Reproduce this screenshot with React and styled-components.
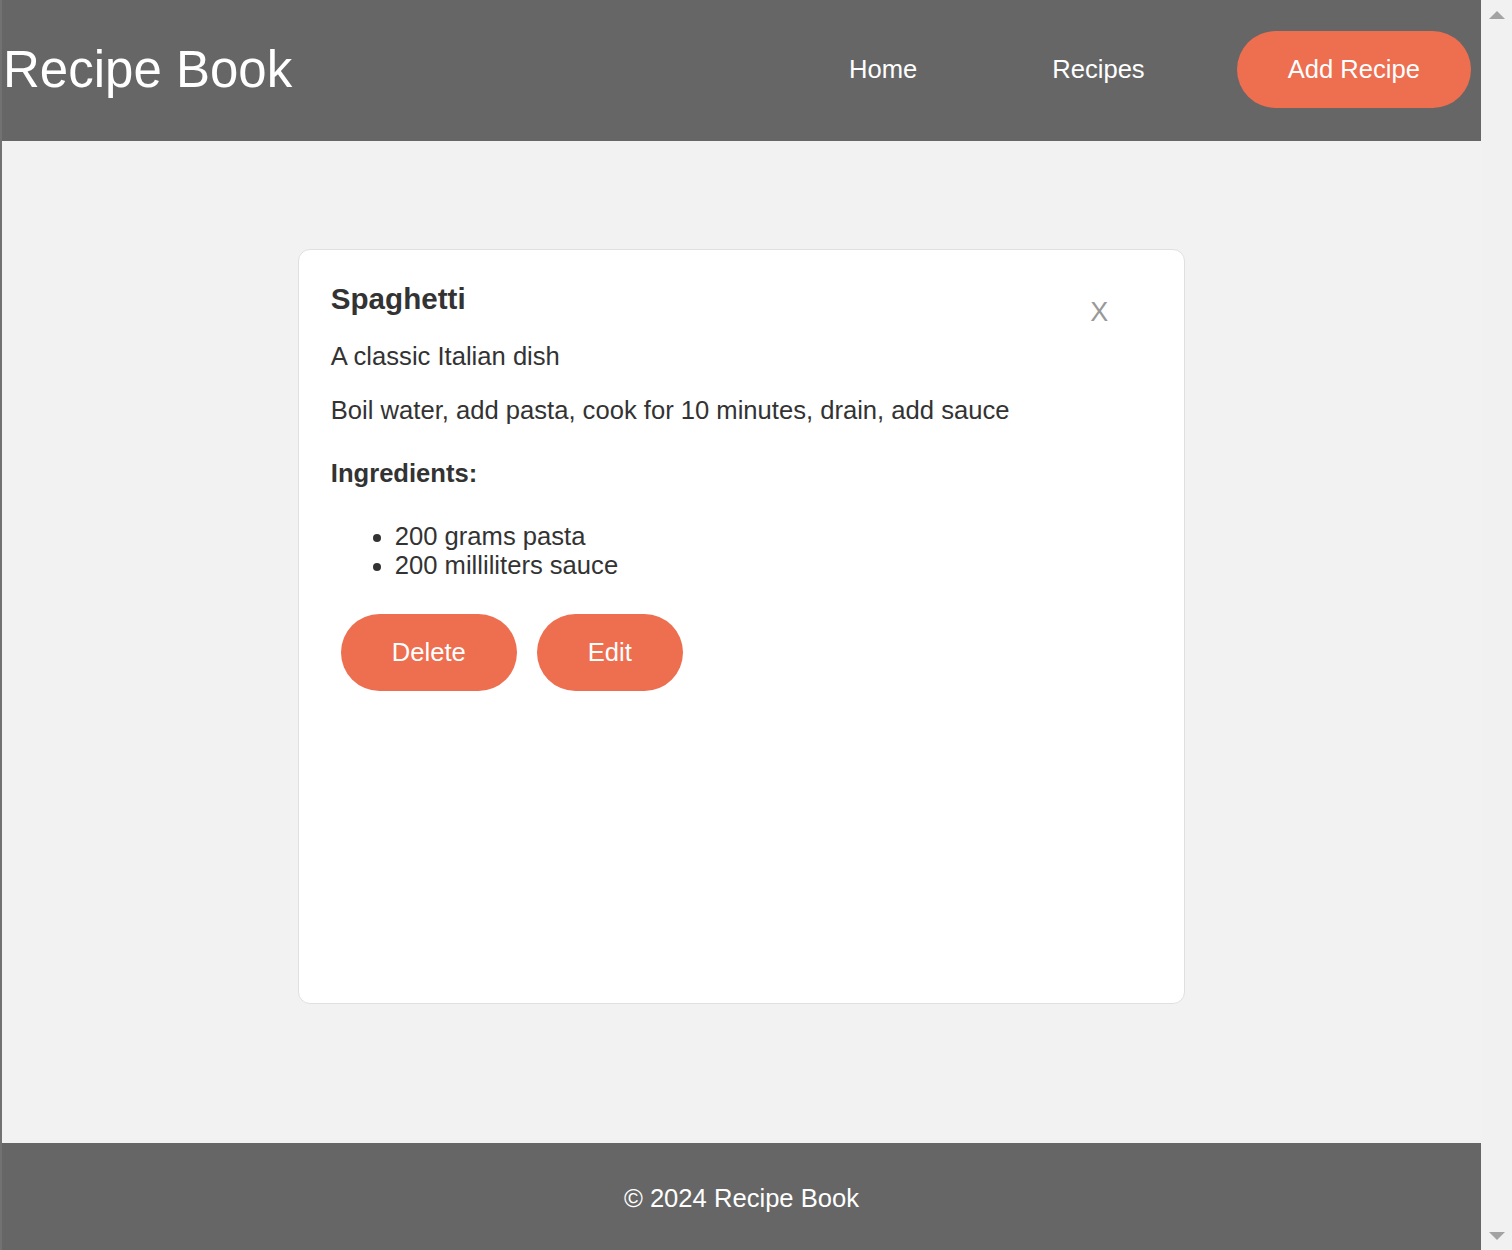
import React from 'react';
import styled, { createGlobalStyle } from 'styled-components';

const GlobalStyle = createGlobalStyle`
    body {
        margin: 0;
        font-family: "Liberation Sans", Arial, sans-serif;
        background-color: #f2f2f2;
        color: #333;
    }
`;

const Page = styled.div`
    margin-right: 31px;
    border-left: 2px solid #727272;
    min-height: 100vh;
    display: flex;
    flex-direction: column;
`;

// window scroll rail drawn at the right edge, over the page
const ScrollRail = styled.div`
    position: fixed;
    top: 0;
    right: 0;
    bottom: 0;
    width: 31px;
    background-color: #f1f1f1;
    display: flex;
    flex-direction: column;
    justify-content: space-between;
    align-items: center;
    padding: 11px 0 10px;
    box-sizing: border-box;
`;

const Arrow = styled.span`
    width: 0;
    height: 0;
    border-left: 8px solid transparent;
    border-right: 8px solid transparent;
    border-${props => (props.$down ? 'top' : 'bottom')}: 8px solid #a3a3a3;
`;

const Header = styled.header`
    height: 141px;
    background-color: #666;
    display: flex;
    align-items: center;
    justify-content: space-between;
    padding-right: 10px;
`;

const Title = styled.h1`
    margin: 0 0 2px 1px;
    font-size: 51px;
    font-weight: normal;
    color: #fff;
`;

const Nav = styled.nav`
    display: flex;
    align-items: center;
    gap: 53px;
    margin-bottom: 2px;
`;

const NavLink = styled.a`
    padding: 0 39px 0 43px;
    font-size: 25.6px;
    color: #fff;
    text-decoration: none;
    cursor: pointer;
`;

const Button = styled.button`
    margin: ${props => props.$margin || '0'};
    padding: 24px 51px;
    border: none;
    border-radius: 40px;
    background-color: #ee6e50;
    color: #fff;
    font-family: inherit;
    font-size: 25.6px;
    line-height: 29px;
    cursor: pointer;
`;

const Main = styled.main`
    flex: 1;
    padding: 108px 0 139px;
`;

const Card = styled.div`
    position: relative;
    width: 60%;
    margin: 0 auto;
    padding: 16px 32px;
    box-sizing: border-box;
    min-height: 755px;
    background-color: #fff;
    border: 1px solid #e0e0e0;
    border-radius: 12px;
`;

const CloseButton = styled.span`
    position: absolute;
    top: 47px;
    right: 76px;
    font-size: 27px;
    line-height: 30px;
    color: #999;
    cursor: pointer;
`;

const RecipeName = styled.h2`
    margin: 16px 0 26px;
    font-size: 29.6px;
    line-height: 34px;
`;

const Text = styled.p`
    margin: 25px 0;
    font-size: 25.6px;
    line-height: 29px;
`;

const SubHeading = styled.h3`
    margin: 34px 0 0;
    font-size: 25.6px;
    line-height: 29px;
`;

const IngredientList = styled.ul`
    margin: 34px 0 24px;
    padding-left: 64px;
    font-size: 25.6px;
    line-height: 29px;
`;

const Actions = styled.div`
    display: flex;
`;

const Footer = styled.footer`
    padding: 41px 0 38px;
    background-color: #666;
    color: #fff;
    text-align: center;
    font-size: 25.6px;
    line-height: 29px;
`;

const App = () => {
    return (
        <>
            <GlobalStyle />
            <Page>
                <Header>
                    <Title>Recipe Book</Title>
                    <Nav>
                        <NavLink>Home</NavLink>
                        <NavLink>Recipes</NavLink>
                        <Button>Add Recipe</Button>
                    </Nav>
                </Header>
                <Main>
                    <Card>
                        <CloseButton>X</CloseButton>
                        <RecipeName>Spaghetti</RecipeName>
                        <Text>A classic Italian dish</Text>
                        <Text>Boil water, add pasta, cook for 10 minutes, drain, add sauce</Text>
                        <SubHeading>Ingredients:</SubHeading>
                        <IngredientList>
                            <li>200 grams pasta</li>
                            <li>200 milliliters sauce</li>
                        </IngredientList>
                        <Actions>
                            <Button $margin="10px">Delete</Button>
                            <Button $margin="10px">Edit</Button>
                        </Actions>
                    </Card>
                </Main>
                <Footer>© 2024 Recipe Book</Footer>
            </Page>
            <ScrollRail>
                <Arrow />
                <Arrow $down />
            </ScrollRail>
        </>
    );
};

export default App;
